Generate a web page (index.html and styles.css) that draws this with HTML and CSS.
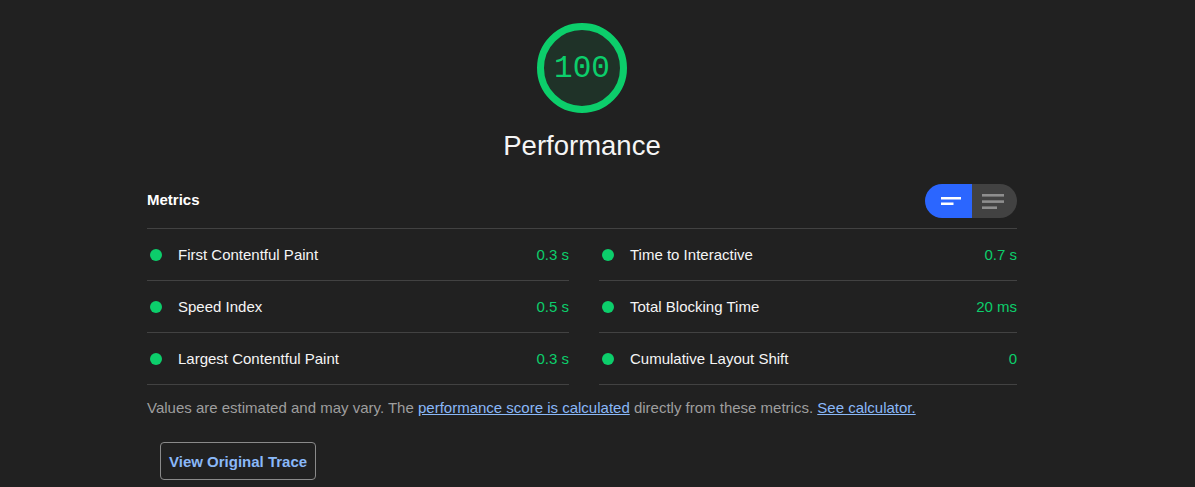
FILE: index.html
```html
<!DOCTYPE html>
<html lang="en">
<head>
<meta charset="utf-8">
<title>Performance</title>
<link rel="stylesheet" href="styles.css">
</head>
<body>
<div class="report">
  <div class="gauge-wrap">
    <div class="gauge">
      <svg class="gauge-svg" width="90" height="90" viewBox="0 0 90 90">
        <circle cx="45" cy="45" r="41.5" fill="#1f3228" stroke="#0cce6b" stroke-width="7"/>
      </svg>
      <span class="gauge-num">100</span>
    </div>
    <div class="gauge-label">Performance</div>
  </div>

  <div class="metrics-header">
    <span class="metrics-title">Metrics</span>
    <div class="toggle">
      <span class="toggle-half toggle-on">
        <svg width="20" height="9" viewBox="0 0 20 9">
          <rect x="0" y="0" width="20" height="2.5" fill="#ffffff"/>
          <rect x="0" y="5.5" width="12.5" height="2.5" fill="#ffffff"/>
        </svg>
      </span>
      <span class="toggle-half toggle-off">
        <svg width="22" height="15" viewBox="0 0 22 15">
          <rect x="0" y="0" width="22" height="2.6" fill="#8e8e8e"/>
          <rect x="0" y="6.3" width="22" height="2.6" fill="#8e8e8e"/>
          <rect x="0" y="12.4" width="15" height="2.6" fill="#8e8e8e"/>
        </svg>
      </span>
    </div>
  </div>

  <div class="metrics-grid">
    <div class="metric"><span class="dot"></span><span class="metric-name">First Contentful Paint</span><span class="metric-value">0.3 s</span></div>
    <div class="metric"><span class="dot"></span><span class="metric-name">Time to Interactive</span><span class="metric-value">0.7 s</span></div>
    <div class="metric"><span class="dot"></span><span class="metric-name">Speed Index</span><span class="metric-value">0.5 s</span></div>
    <div class="metric"><span class="dot"></span><span class="metric-name">Total Blocking Time</span><span class="metric-value">20 ms</span></div>
    <div class="metric"><span class="dot"></span><span class="metric-name">Largest Contentful Paint</span><span class="metric-value">0.3 s</span></div>
    <div class="metric"><span class="dot"></span><span class="metric-name">Cumulative Layout Shift</span><span class="metric-value">0</span></div>
  </div>

  <p class="note">Values are estimated and may vary. The <a href="#">performance score is calculated</a> directly from these metrics. <a href="#">See calculator.</a></p>

  <button class="trace-btn" type="button">View Original Trace</button>
</div>
</body>
</html>
```

FILE: styles.css
```css
html, body {
  margin: 0;
  padding: 0;
  background: #212121;
}

body {
  font-family: "Liberation Sans", Arial, sans-serif;
  color: #f5f5f5;
}

.report {
  width: 870px;
  margin-left: 147px;
  padding-top: 23px;
}

.gauge-wrap {
  display: flex;
  flex-direction: column;
  align-items: center;
}

.gauge {
  position: relative;
  width: 90px;
  height: 90px;
}

.gauge-svg {
  display: block;
}

.gauge-num {
  position: absolute;
  inset: 0;
  display: flex;
  align-items: center;
  justify-content: center;
  font-family: "Liberation Mono", "DejaVu Sans Mono", monospace;
  font-size: 31px;
  color: #0cce6b;
  padding-top: 1px;
}

.gauge-label {
  margin-top: 15px;
  font-size: 27.5px;
  line-height: 36px;
  color: #f5f5f5;
}

.metrics-header {
  margin-top: 20px;
  display: flex;
  align-items: center;
  justify-content: space-between;
  height: 34px;
  padding-bottom: 10px;
  border-bottom: 1px solid #424242;
}

.metrics-title {
  font-size: 15px;
  font-weight: bold;
  color: #ffffff;
  padding-bottom: 4px;
}

.toggle {
  display: flex;
  width: 92px;
  height: 34px;
  border-radius: 17px;
  overflow: hidden;
}

.toggle-half {
  flex: 1;
  display: flex;
  align-items: center;
}

.toggle-on {
  background: #2b66ff;
  justify-content: flex-end;
  padding-right: 11px;
  padding-top: 1px;
}

.toggle-off {
  background: #424242;
  justify-content: flex-start;
  padding-left: 10px;
  padding-top: 1px;
}

.toggle-half svg {
  display: block;
}

.metrics-grid {
  display: grid;
  grid-template-columns: 422px 1fr;
  column-gap: 30px;
}

.metric {
  display: flex;
  align-items: center;
  height: 51px;
  border-bottom: 1px solid #424242;
  font-size: 15px;
}

.dot {
  width: 12px;
  height: 12px;
  border-radius: 50%;
  background: #0cce6b;
  margin-left: 3px;
  margin-right: 16px;
  flex: none;
}

.metric-name {
  flex: 1;
  color: #f5f5f5;
}

.metric-value {
  color: #0cce6b;
}

.note {
  margin: 13px 0 0 0;
  font-size: 15px;
  line-height: 20px;
  color: #9e9e9e;
}

.note a {
  color: #8ab8f8;
  text-decoration: underline;
}

.trace-btn {
  margin: 24px 0 0 13px;
  height: 38px;
  padding: 0 8px;
  background: transparent;
  border: 1px solid #8a8a8a;
  border-radius: 4px;
  font-family: "Liberation Sans", Arial, sans-serif;
  font-size: 15px;
  font-weight: bold;
  color: #8ab8f8;
}
```
